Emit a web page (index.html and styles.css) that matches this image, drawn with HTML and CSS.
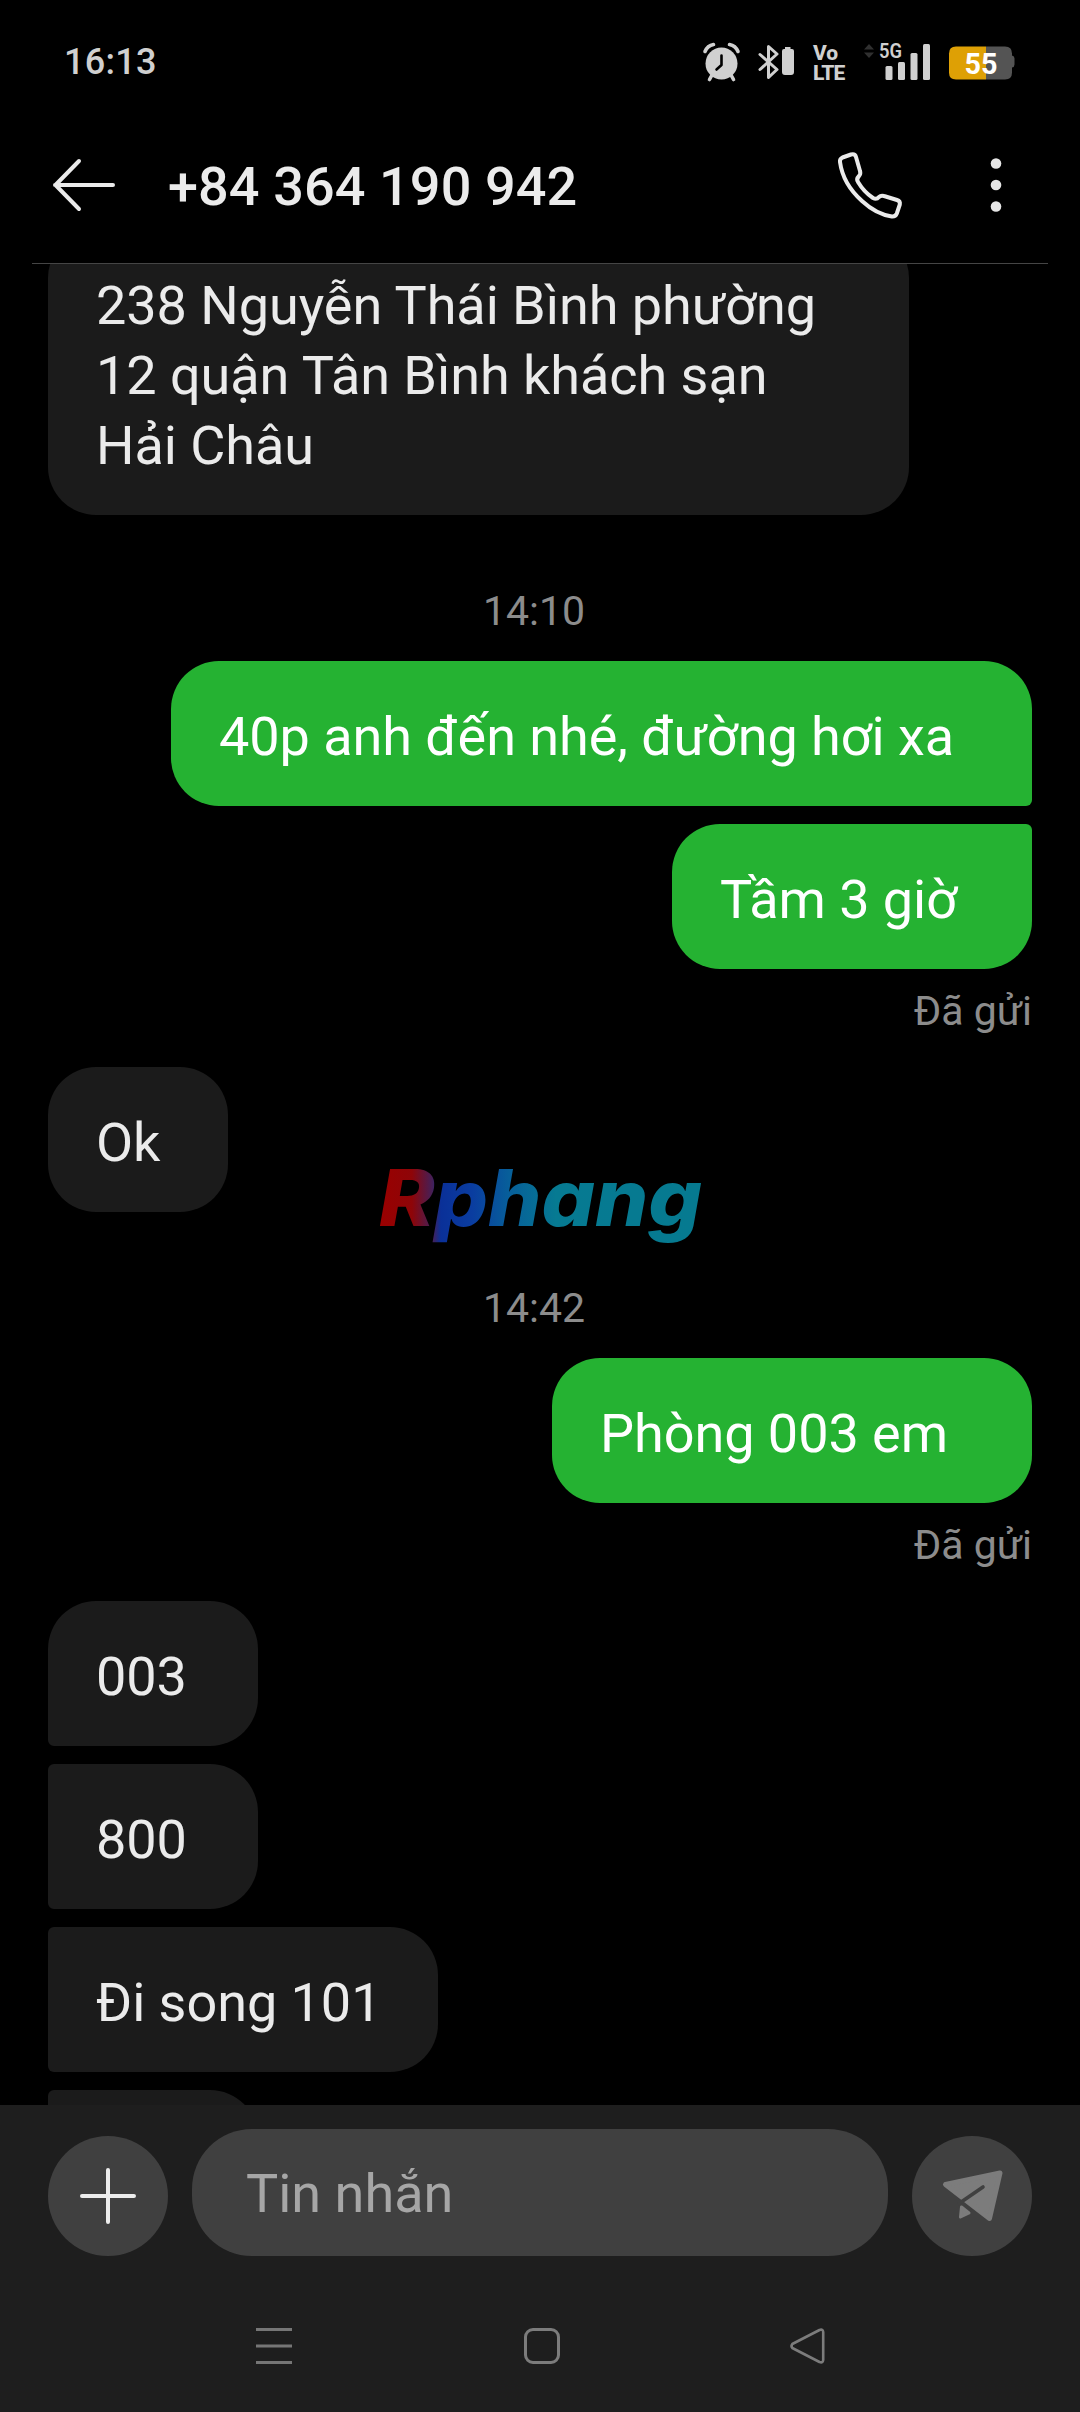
FILE: index.html
```html
<!DOCTYPE html>
<html lang="vi">
<head>
<meta charset="utf-8">
<title>+84 364 190 942</title>
<link rel="stylesheet" href="styles.css">
</head>
<body>
<div class="phone">
  <div class="status-bar">
    <span class="clock">16:13</span>
    <div class="status-icons">
      <svg width="37" height="38" viewBox="0 0 37 38">
        <circle cx="18.500" cy="20.500" r="16" fill="#d0d0d0"/>
        <path d="M2 8.500Q4.500 2.500 10.500 1.500M35 8.500Q32.500 2.500 26.500 1.500M9 32l-2.500 4.500M28 32l2.500 4.500" fill="none" stroke="#d0d0d0" stroke-width="3.600" stroke-linecap="round"/>
        <path d="M18.500 12.500v9.500l-5 4.500" fill="none" stroke="#000" stroke-width="2.600" stroke-linecap="round" stroke-linejoin="round"/>
      </svg>
      <svg width="36" height="38" viewBox="0 0 36 38">
        <path d="M2 11.500L19 26.500 10.500 34.500V3.500L19 11 2 26.500" fill="none" stroke="#d0d0d0" stroke-width="3" stroke-linecap="round" stroke-linejoin="round"/>
        <path d="M27 4h5.500v2H34q2 0 2 2v21q0 3-3 3h-6q-3 0-3-3V8q0-2 2-2h1z" fill="#d0d0d0"/>
      </svg>
      <div class="volte"><span>Vo</span><span>LTE</span></div>
      <svg width="68" height="38" viewBox="0 0 68 38">
        <path d="M1 6.500L6 1l5 5.500zM1 9.500h10L6 15z" fill="#303030"/>
        <text x="16" y="15" class="net" font-size="20" textLength="23" lengthAdjust="spacingAndGlyphs">5G</text>
        <g fill="#d0d0d0"><rect x="22.500" y="23" width="7" height="14" rx="1.500"/><rect x="35" y="19" width="7" height="18" rx="1.500"/><rect x="47.500" y="10" width="7" height="27" rx="1.500"/><rect x="60" y="1" width="7" height="36" rx="1.500"/></g>
      </svg>
      <svg width="66" height="38" viewBox="0 0 66 38">
        <path d="M37 3.500h19q7 0 7 7v2q2.500.5 2.500 3v6q0 2.500-2.500 3v5q0 7-7 7H37z" fill="#545454"/>
        <path d="M37 3.500H7q-7 0-7 7v19q0 7 7 7h30z" fill="#dea005"/>
        <text x="15.500" y="31" class="level" font-size="30" textLength="33" lengthAdjust="spacingAndGlyphs">55</text>
      </svg>
    </div>
  </div>

  <header class="header">
    <svg class="back" width="62" height="54" viewBox="0 0 62 54"><path d="M60 27H2M26 3L2.500 27 26 51" fill="none" stroke="#ebebeb" stroke-width="4" stroke-linecap="round" stroke-linejoin="round"/></svg>
    <h1 class="contact">+84 364 190 942</h1>
    <svg class="call" width="64" height="66" viewBox="0 0 64 66"><path d="M4.500 6.500L13 3.500q4-1 5 2.500l4 14q1 3-1 5-3 3-1 6 6 10 15 16 3.500 2 6-1 2-2 5-1l13 4q3.500 1 2.800 4.500l-3 9q-1.300 3.300-5 3Q38 63 24 50 5 33 2 11 1.500 8 4.500 6.500z" fill="none" stroke="#ebebeb" stroke-width="4" stroke-linejoin="round"/></svg>
    <svg class="more" width="12" height="54" viewBox="0 0 12 54" fill="#e6e6e6"><circle cx="6" cy="5.500" r="5.300"/><circle cx="6" cy="27" r="5.300"/><circle cx="6" cy="48.500" r="5.300"/></svg>
  </header>

  <main class="thread">
    <p class="bubble in w-full">238 Nguyễn Thái Bình phường<br>12 quận Tân Bình khách sạn<br>Hải Châu</p>
    <time class="time">14:10</time>
    <p class="bubble out w-full tail-bottom">40p anh đến nhé, đường hơi xa</p>
    <p class="bubble out w-short tail-top">Tầm 3 giờ</p>
    <span class="sent">Đã gửi</span>
    <p class="bubble in w-tiny">Ok</p>
    <time class="time">14:42</time>
    <p class="bubble out w-wide">Phòng 003 em</p>
    <span class="sent">Đã gửi</span>
    <p class="bubble in w-code tail-bottom">003</p>
    <p class="bubble in w-code tail-top tail-bottom">800</p>
    <p class="bubble in w-line tail-top tail-bottom">Đi song 101</p>
    <p class="bubble in w-code tail-top"></p>
  </main>

  <svg class="watermark" width="340" height="100" viewBox="0 0 340 100">
    <defs>
      <linearGradient id="brand" gradientUnits="userSpaceOnUse" x1="10" y1="0" x2="330" y2="0">
        <stop offset="0" stop-color="#9a0000"/><stop offset=".1" stop-color="#8e0508"/><stop offset=".165" stop-color="#43205a"/><stop offset=".19" stop-color="#0a3098"/><stop offset=".29" stop-color="#0a3da0"/><stop offset=".4" stop-color="#075e9a"/><stop offset=".55" stop-color="#067a92"/><stop offset="1" stop-color="#067a90"/>
      </linearGradient>
    </defs>
    <text x="9" y="66" textLength="323" lengthAdjust="spacingAndGlyphs" fill="url(#brand)">Rphang</text>
  </svg>

  <footer class="footer">
    <div class="composer">
      <button class="round" aria-label="Thêm"><svg width="60" height="60" viewBox="0 0 60 60"><path d="M30 4v52M4 30h52" stroke="#ededed" stroke-width="4" stroke-linecap="round"/></svg></button>
      <div class="field">Tin nhắn</div>
      <button class="round" aria-label="Gửi"><svg width="62" height="54" viewBox="0 0 62 54" fill="#7c7c7c" stroke="#7c7c7c" stroke-width="5" stroke-linejoin="round"><path d="M4.500 15.500L59 4 48.500 49.500z"/><path d="M20.500 38l7.500 6-8.500 4z" stroke-width="3"/><path d="M42 18L18 34.500" fill="none" stroke="#404040" stroke-width="3.600" stroke-linecap="round"/></svg></button>
    </div>
    <nav class="nav">
      <svg width="36" height="36" viewBox="0 0 36 36"><path d="M0 1.500h36M0 18h36M0 34.500h36" stroke="#767676" stroke-width="3"/></svg>
      <svg width="36" height="36" viewBox="0 0 36 36"><rect x="1.500" y="1.500" width="33" height="33" rx="7.500" fill="none" stroke="#7c7c7c" stroke-width="3"/></svg>
      <svg width="36" height="36" viewBox="0 0 36 36"><path d="M2.300 16L29.500 2q3.500-1.200 3.700 2v28q-.2 3.200-3.700 2L2.300 20q-1.600-2 0-4z" fill="none" stroke="#7c7c7c" stroke-width="2.600" stroke-linejoin="round"/></svg>
    </nav>
  </footer>
</div>
</body>
</html>
```
FILE: styles.css
```css
* { box-sizing: border-box; }

body {
  margin: 0;
  background: #000;
  color: #ebebeb;
  font-family: Roboto, "Noto Sans", sans-serif;
}

svg { display: block; flex: none; overflow: visible; }

.phone {
  position: relative;
  display: flex;
  flex-direction: column;
  width: 1080px;
  height: 2412px;
  overflow: hidden;
}

.status-bar {
  display: flex;
  justify-content: space-between;
  align-items: center;
  height: 124px;
  padding: 0 65px 0 64px;
}

.clock {
  color: #d0d0d0;
  font-size: 36px;
  font-weight: 500;
  letter-spacing: 0.3px;
}

.status-icons { display: flex; gap: 18px; }

.volte {
  display: flex;
  flex-direction: column;
  width: 33px;
  height: 38px;
  padding-left: 1px;
  color: #d0d0d0;
  font-size: 21px;
  font-weight: 800;
  line-height: 20px;
  letter-spacing: -0.9px;
}

.volte span:first-child { letter-spacing: 0; }

.net { fill: #d0d0d0; font-weight: 600; }
.level { fill: #fff; font-weight: 700; }

.header {
  display: flex;
  align-items: center;
  height: 140px;
  margin: 0 32px;
  padding: 0 46px 17px 21px;
  border-bottom: 1px solid #454545;
}

.contact {
  flex: 1;
  margin: 3px 0 0 53px;
  font-size: 54px;
  font-weight: 500;
  line-height: 64px;
  letter-spacing: 0.1px;
}

.call { margin-top: -2px; }
.more { margin-left: 88px; }

.thread {
  display: flex;
  flex: none;
  flex-direction: column;
  align-items: flex-start;
  height: 1841px;
  padding: 0 48px;
  overflow: hidden;
}

.bubble {
  flex: none;
  min-height: 145px;
  margin: 0;
  padding: 41px 0 34px 48px;
  border-radius: 48px;
  font-size: 54px;
  line-height: 70px;
  letter-spacing: -0.05px;
  white-space: nowrap;
}

.bubble:first-child { margin-top: -34px; }
.bubble + .bubble { margin-top: 18px; }

.in { background: #1b1b1b; }
.out { align-self: flex-end; background: #25b232; color: #fff; }

.w-full { width: 861px; }
.w-wide { width: 480px; }
.w-line { width: 390px; }
.w-short { width: 360px; }
.w-code { width: 210px; }
.w-tiny { width: 180px; }

.in.tail-top { border-top-left-radius: 6px; }
.in.tail-bottom { border-bottom-left-radius: 6px; }
.out.tail-top { border-top-right-radius: 6px; }
.out.tail-bottom { border-bottom-right-radius: 6px; }

.time, .sent {
  flex: none;
  color: #8c8c8c;
  font-size: 41px;
  line-height: 48px;
}

.time {
  align-self: center;
  height: 146px;
  padding: 72px 12px 0 0;
}

.sent {
  align-self: flex-end;
  height: 98px;
  padding-top: 18px;
}

.watermark {
  position: absolute;
  top: 1160px;
  left: 370px;
  font-family: Inter, sans-serif;
  font-size: 78px;
  font-style: italic;
  font-weight: 800;
}

.footer { flex: 1; background: #1e1e1e; }

.composer {
  display: flex;
  align-items: flex-end;
  gap: 24px;
  padding: 24px 48px 0;
}

.round {
  display: flex;
  flex: none;
  align-items: center;
  justify-content: center;
  width: 120px;
  height: 120px;
  padding: 0;
  border: 0;
  border-radius: 50%;
  background: #404040;
}

.field {
  flex: 1;
  height: 127px;
  padding: 30px 54px;
  border-radius: 60px;
  background: #404040;
  color: #a6a6a6;
  font-size: 54px;
  line-height: 70px;
}

.nav {
  display: flex;
  justify-content: space-between;
  padding: 72px 254px 0 256px;
}

.nav svg:nth-child(2) { margin-left: 2px; }
```
